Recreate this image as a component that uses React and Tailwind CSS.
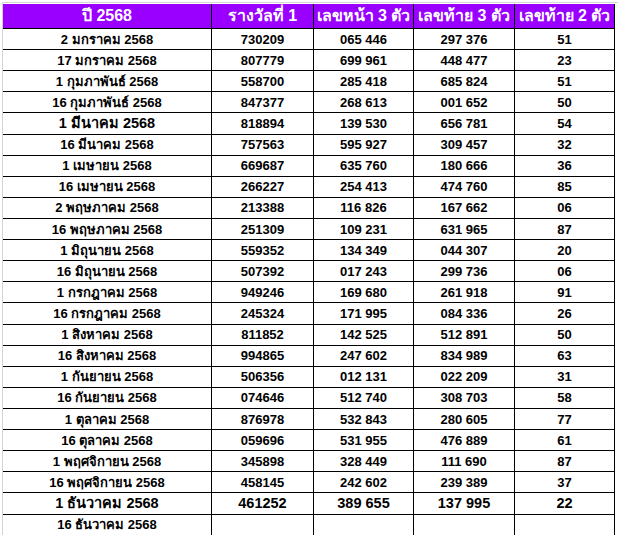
const rows = [
  ["2 มกราคม 2568", "730209", "065 446", "297 376", "51"],
  ["17 มกราคม 2568", "807779", "699 961", "448 477", "23"],
  ["1 กุมภาพันธ์ 2568", "558700", "285 418", "685 824", "51"],
  ["16 กุมภาพันธ์ 2568", "847377", "268 613", "001 652", "50"],
  ["1 มีนาคม 2568", "818894", "139 530", "656 781", "54", "date"],
  ["16 มีนาคม 2568", "757563", "595 927", "309 457", "32"],
  ["1 เมษายน 2568", "669687", "635 760", "180 666", "36"],
  ["16 เมษายน 2568", "266227", "254 413", "474 760", "85"],
  ["2 พฤษภาคม 2568", "213388", "116 826", "167 662", "06"],
  ["16 พฤษภาคม 2568", "251309", "109 231", "631 965", "87"],
  ["1 มิถุนายน 2568", "559352", "134 349", "044 307", "20"],
  ["16 มิถุนายน 2568", "507392", "017 243", "299 736", "06"],
  ["1 กรกฎาคม 2568", "949246", "169 680", "261 918", "91"],
  ["16 กรกฎาคม 2568", "245324", "171 995", "084 336", "26"],
  ["1 สิงหาคม 2568", "811852", "142 525", "512 891", "50"],
  ["16 สิงหาคม 2568", "994865", "247 602", "834 989", "63"],
  ["1 กันยายน 2568", "506356", "012 131", "022 209", "31"],
  ["16 กันยายน 2568", "074646", "512 740", "308 703", "58"],
  ["1 ตุลาคม 2568", "876978", "532 843", "280 605", "77"],
  ["16 ตุลาคม 2568", "059696", "531 955", "476 889", "61"],
  ["1 พฤศจิกายน 2568", "345898", "328 449", "111 690", "87"],
  ["16 พฤศจิกายน 2568", "458145", "242 602", "239 389", "37"],
  ["1 ธันวาคม 2568", "461252", "389 655", "137 995", "22", "all"],
  ["16 ธันวาคม 2568", "", "", "", ""],
]

const headers = ["ปี 2568", "รางวัลที่ 1", "เลขหน้า 3 ตัว", "เลขท้าย 3 ตัว", "เลขท้าย 2 ตัว"]

export default function App() {
  return (
    <div className="w-[618px] h-[535px] overflow-hidden bg-white pl-[2px] pt-[2px] font-['Liberation_Sans',Tahoma,sans-serif] font-bold text-black">
      <div className="border-l border-t border-[#d4d4d4] pt-[1px]">
        {/* header */}
        <div className="grid grid-cols-[209px_102px_100px_101px_100px] h-[25px] bg-[#9900ff] border-b border-black w-[612px]">
          {headers.map((h, i) => (
            <div key={i} className="flex items-center justify-center border-r border-black text-white text-[16px] leading-none whitespace-nowrap">
              {h}
            </div>
          ))}
        </div>

        {rows.map((r, i) => (
          <div key={i} className="grid grid-cols-[209px_102px_100px_101px_100px] h-[21.12px] border-b border-black w-[612px]">
            {r.slice(0, 5).map((c, j) => {
              const big = r[5] === "all" || (r[5] === "date" && j === 0)
              return (
                <div
                  key={j}
                  className={
                    "flex items-center justify-center border-r border-black leading-none whitespace-nowrap " +
                    (big ? "text-[14.5px]" : "text-[13px]")
                  }
                >
                  {c}
                </div>
              )
            })}
          </div>
        ))}
      </div>
    </div>
  )
}
